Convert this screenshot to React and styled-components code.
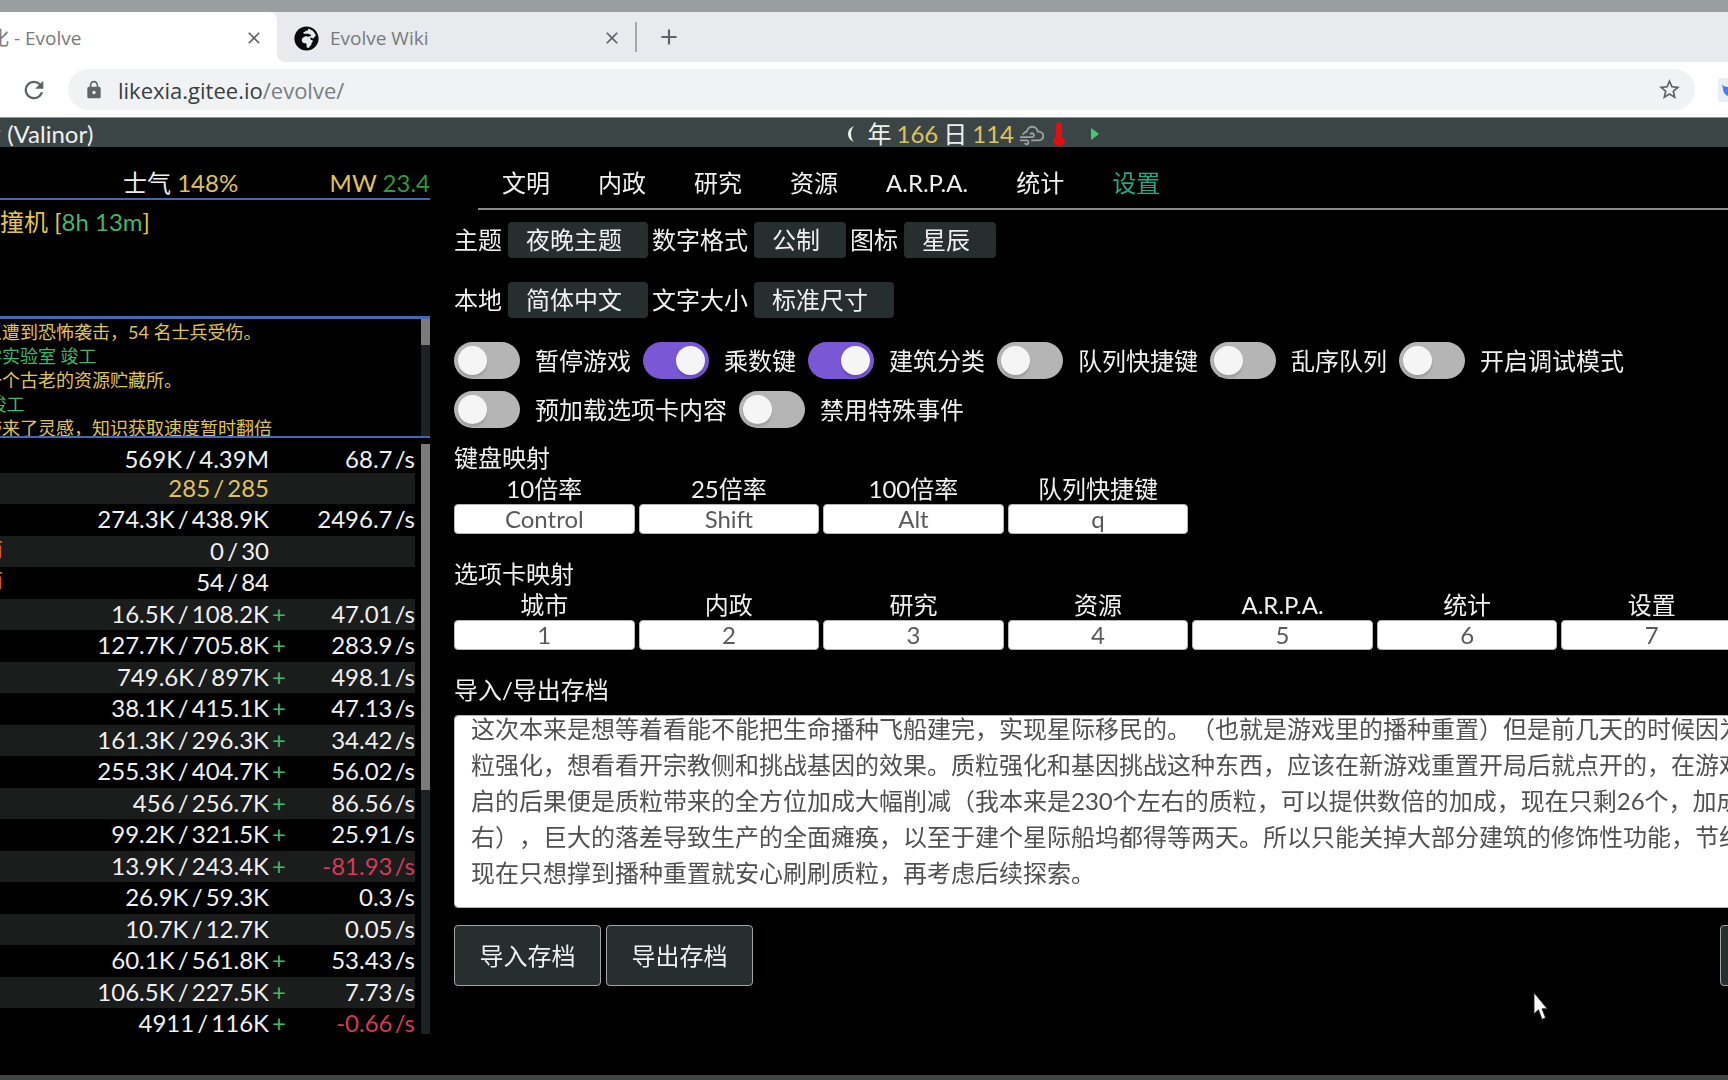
import React, { useEffect, useRef } from 'react';
import styled, { createGlobalStyle } from 'styled-components';
import { MdAdd, MdClose, MdLock, MdRefresh, MdStarBorder } from 'react-icons/md';
import { FaGlobeAfrica } from 'react-icons/fa';
import { WiCloudyGusts } from 'react-icons/wi';

const GlobalStyle = createGlobalStyle`
	* {
		box-sizing: border-box;
	}

	body {
		margin: 0;
		overflow: hidden;
		background: #000;
		color: #f0f0f0;
		font-family: Lato, "Noto Sans CJK SC", sans-serif;
		font-size: 24px;
		line-height: 32px;
		text-spacing-trim: space-all;
	}

	button, input, select, textarea {
		margin: 0;
		font: inherit;
		color: inherit;
	}
`

const colors = {
	bar: '#3b4545',
	button: '#272e2e',
	blue: '#4069b4',
	warning: '#e0c25a',
	success: '#43b768',
	green: '#2c9a3c',
	danger: '#d6395a',
	orange: '#d2691e'
};

const Screen = styled.div`
	display: flex;
	flex-direction: column;
	height: 100vh;
	overflow: hidden;
`

/* browser chrome */

const Browser = styled.header`
	border-top: 12px solid #9b9e9f;
	border-bottom: 1px solid #8f9797;
	background: #fff;
	color: #5f6368;
	font-family: "Open Sans", "Noto Sans CJK SC", sans-serif;
`

const TabStrip = styled.div`
	display: flex;
	align-items: center;
	height: 50px;
	background: #e8eaed;
	font-size: 19px;
`

const BrowserTab = styled.div`
	display: flex;
	align-items: center;
	flex: none;
	width: ${props => props.$active ? '301px' : '358px'};
	height: 50px;
	margin-left: ${props => props.$active ? '-24px' : '0'};
	padding: ${props => props.$active ? '2px 13px 0 14px' : '2px 13px 0 17px'};
	gap: 11px;
	border-radius: ${props => props.$active ? '0 8px 0 0' : '0 0 0 8px'};
	background: ${props => props.$active ? '#fff' : '#e8eaed'};
	color: #777a7e;
`

/* white behind the rounded foot of the inactive tab */
const TabFoot = styled.div`
	background: #fff;
`

const TabTitle = styled.span`
	flex: 1;
	white-space: nowrap;
`

const IconButton = styled.button`
	display: flex;
	padding: 0;
	border: 0;
	background: none;
	color: #5f6368;
`

const NewTab = styled.div`
	display: flex;
	align-items: center;
	height: 30px;
	padding-left: 19px;
	border-left: 2px solid #a5a8ac;
`

const AddressRow = styled.div`
	display: flex;
	align-items: center;
	height: 55px;
	padding-left: 20px;
`

const AddressBox = styled.div`
	display: flex;
	align-items: center;
	flex: 1;
	height: 41px;
	margin: 0 23px 0 20px;
	padding: 0 13px 0 16px;
	gap: 14px;
	border-radius: 21px;
	background: #f0f2f4;
`

const Address = styled.span`
	flex: 1;
	color: #7a7d81;
	font-size: 22px;
	line-height: 30px;

	b {
		color: #3a3d41;
		font-weight: 400;
	}
`

const Extension = styled.div`
	display: flex;
	width: 10px;
	height: 24px;
	border-radius: 3px 0 0 3px;
	background: #eaeefb;
`

/* game */

const TopBar = styled.div`
	display: flex;
	flex: none;
	align-items: center;
	justify-content: space-between;
	height: 29px;
	padding: 3px 628px 0 0;
	background: ${colors.bar};
`

const Planet = styled.span`
	margin-left: -23px;
	white-space: nowrap;
`

const Calendar = styled.span`
	display: flex;
	align-items: center;
	gap: 5px;
`

const Weather = styled.span`
	display: flex;
	align-items: center;
	gap: 4px;
	margin-left: -3px;
	color: #9aa39c;
`

const PlayButton = styled(IconButton)`
	margin-left: 19px;
`

const Value = styled.span`
	color: ${props => colors[props.$tone]};
`

const Columns = styled.div`
	display: flex;
	flex: 1;
	min-height: 0;
`

const LeftColumn = styled.aside`
	display: flex;
	flex: none;
	flex-direction: column;
	width: 454px;
	margin-left: -24px;
`

const Stats = styled.div`
	display: flex;
	justify-content: space-between;
	height: 53px;
	padding: 20px 0 0 147px;
	border-bottom: 2px solid ${colors.blue};
`

const Queue = styled.div`
	height: 116px;
	padding-top: 6px;
	color: ${colors.warning};
`

const Messages = styled.div`
	display: flex;
	justify-content: space-between;
	height: 122px;
	border-top: 3px solid ${colors.blue};
	border-bottom: 2px solid ${colors.blue};
`

const MessageList = styled.div`
	overflow: hidden;
	padding: 1px 0 0 8px;
	font-size: 18px;
	line-height: 24px;
	white-space: pre;
`

const Message = styled.div`
	color: ${props => colors[props.$tone]};
`

const ScrollTrack = styled.div`
	flex: none;
	width: 9px;
	background: #1d2121;
`

const ScrollThumb = styled.div`
	height: ${props => props.$size};
	background: #7b7b7b;
`

const Resources = styled.div`
	display: flex;
	flex: 1;
	min-height: 0;
	gap: 6px;
	margin: 6px 0 41px;
	overflow: hidden;
`

const ResourceTable = styled.table`
	flex: 1;
	align-self: flex-start;
	table-layout: fixed;
	border-collapse: collapse;
	text-align: right;
	line-height: 30px;
	white-space: nowrap;

	tr {
		height: 32px;
	}

	tr:nth-child(even) {
		height: 31px;
		background: #1b1c1c;
	}

	tr:first-child {
		height: 29px;
		line-height: 29px;
	}

	td {
		padding: 0;
		vertical-align: top;
	}
`

const NameCell = styled.td`
	width: 27px;
	color: ${colors.orange};
`

const AmountCell = styled.td`
	color: ${props => props.$full ? colors.warning : 'inherit'};
`

const Slash = styled.span`
	margin: 0 -3px;
`

const PlusCell = styled.td`
	width: 17px;
	color: ${colors.success};
`

const RateCell = styled.td`
	width: 129px;
	color: ${props => props.$negative ? colors.danger : 'inherit'};
`

const PerSecond = styled.span`
	margin-left: -4px;
`

const Main = styled.main`
	flex: 1;
	min-width: 0;
	margin: 0 -14px 0 24px;
`

const Tabs = styled.nav`
	display: flex;
	height: 63px;
	margin-left: 24px;
	padding-top: 20px;
	border-bottom: 2px solid #8a8a8a;
`

const Tab = styled.a`
	padding: 0 24px;
	color: ${props => props.$active ? '#2aa583' : 'inherit'};
	text-decoration: none;
`

const Options = styled.div`
	display: flex;
	flex-direction: column;
	gap: 24px;
	margin: 12px 0 24px;
`

const OptionRow = styled.div`
	display: flex;
	gap: 4px;
`

const Option = styled.label`
	display: flex;
	align-items: center;
	gap: 6px;
	height: 36px;
`

const Select = styled.select`
	appearance: none;
	height: 36px;
	padding: 0 26px 0 18px;
	border: 0;
	border-radius: 4px;
	background: ${colors.button};
`

const Switches = styled.div`
	display: flex;
	flex-wrap: wrap;
	gap: 12px;
`

const SwitchLabel = styled.label`
	display: flex;
	align-items: center;
	gap: 15px;
	height: 37px;
`

const Switch = styled.input`
	appearance: none;
	display: flex;
	width: 66px;
	height: 37px;
	padding: 4px;
	border-radius: 19px;
	background: #b5b5b5;

	&::before {
		content: '';
		width: 29px;
		height: 29px;
		border-radius: 50%;
		background: #f5f5f5;
		box-shadow: 0 3px 2px rgba(0, 0, 0, 0.12);
	}

	&:checked {
		justify-content: flex-end;
		background: #7957d5;
	}
`

const Heading = styled.div`
	margin-top: ${props => props.$first ? '14px' : '24px'};
`

const KeyGrid = styled.div`
	display: grid;
	grid-template-columns: repeat(7, 1fr);
	gap: 4px;
`

const Key = styled.label`
	display: flex;
	flex-direction: column;
	line-height: 30px;
	text-align: center;
`

const KeyInput = styled.input`
	width: 100%;
	height: 30px;
	padding: 0;
	border: 1px solid #b5b5b5;
	border-radius: 4px;
	background: #fff;
	color: #5a5a5a;
	text-align: center;
`

const SaveData = styled.textarea`
	display: block;
	width: 100%;
	height: 193px;
	margin-top: 9px;
	padding: 16px;
	border: 1px solid #b5b5b5;
	border-radius: 4px;
	background: #fff;
	color: #505050;
	line-height: 36px;
	white-space: pre;
	resize: none;
	scrollbar-width: none;
`

const Buttons = styled.div`
	display: flex;
	gap: 5px;
	margin: 17px -125px 0 0;
`

const Button = styled.button`
	min-width: 147px;
	height: 61px;
	padding: 0 24px;
	border: 1px solid #a0a5a5;
	border-radius: 4px;
	background: ${colors.button};

	&:last-child {
		margin-left: auto;
	}
`

const BottomBar = styled.footer`
	flex: none;
	height: 5px;
	background: ${colors.bar};
`

const Pointer = styled.svg`
	position: absolute;
	left: 1533px;
	top: 991px;
`

const resources = [
	{ amount: '569K', max: '4.39M', rate: '68.7' },
	{ amount: '285', max: '285', full: true },
	{ amount: '274.3K', max: '438.9K', rate: '2496.7' },
	{ name: '师', amount: '0', max: '30' },
	{ name: '师', amount: '54', max: '84' },
	{ amount: '16.5K', max: '108.2K', plus: true, rate: '47.01' },
	{ amount: '127.7K', max: '705.8K', plus: true, rate: '283.9' },
	{ amount: '749.6K', max: '897K', plus: true, rate: '498.1' },
	{ amount: '38.1K', max: '415.1K', plus: true, rate: '47.13' },
	{ amount: '161.3K', max: '296.3K', plus: true, rate: '34.42' },
	{ amount: '255.3K', max: '404.7K', plus: true, rate: '56.02' },
	{ amount: '456', max: '256.7K', plus: true, rate: '86.56' },
	{ amount: '99.2K', max: '321.5K', plus: true, rate: '25.91' },
	{ amount: '13.9K', max: '243.4K', plus: true, rate: '-81.93' },
	{ amount: '26.9K', max: '59.3K', rate: '0.3' },
	{ amount: '10.7K', max: '12.7K', rate: '0.05' },
	{ amount: '60.1K', max: '561.8K', plus: true, rate: '53.43' },
	{ amount: '106.5K', max: '227.5K', plus: true, rate: '7.73' },
	{ amount: '4911', max: '116K', plus: true, rate: '-0.66' }
];

const messages = [
	['warning', '人遭到恐怖袭击，54 名士兵受伤。'],
	['success', '学实验室 竣工'],
	['warning', '一个古老的资源贮藏所。'],
	['success', ' 竣工'],
	['warning', '带来了灵感，知识获取速度暂时翻倍']
];

const tabs = ['文明', '内政', '研究', '资源', 'A.R.P.A.', '统计', '设置'];

const options = [
	[['主题', '夜晚主题'], ['数字格式', '公制'], ['图标', '星辰']],
	[['本地', '简体中文'], ['文字大小', '标准尺寸']]
];

const switches = [
	['暂停游戏', false],
	['乘数键', true],
	['建筑分类', true],
	['队列快捷键', false],
	['乱序队列', false],
	['开启调试模式', false],
	['预加载选项卡内容', false],
	['禁用特殊事件', false]
];

const keyMap = [['10倍率', 'Control'], ['25倍率', 'Shift'], ['100倍率', 'Alt'], ['队列快捷键', 'q']];

const tabMap = [
	['城市', '1'], ['内政', '2'], ['研究', '3'], ['资源', '4'],
	['A.R.P.A.', '5'], ['统计', '6'], ['设置', '7']
];

const saveText = [
	'这次本来是想等着看能不能把生命播种飞船建完，实现星际移民的。（也就是游戏里的播种重置）但是前几天的时候因为',
	'粒强化，想看看开宗教侧和挑战基因的效果。质粒强化和基因挑战这种东西，应该在新游戏重置开局后就点开的，在游戏',
	'启的后果便是质粒带来的全方位加成大幅削减（我本来是230个左右的质粒，可以提供数倍的加成，现在只剩26个，加成',
	'右），巨大的落差导致生产的全面瘫痪，以至于建个星际船坞都得等两天。所以只能关掉大部分建筑的修饰性功能，节约',
	'现在只想撑到播种重置就安心刷刷质粒，再考虑后续探索。'
].join('\n');

const ResourceRow = ({ name, amount, max, full, plus, rate }) => (
	<tr>
		<NameCell>{name}</NameCell>
		<AmountCell $full={full}>{amount} <Slash>/</Slash> {max}</AmountCell>
		<PlusCell>{plus && '+'}</PlusCell>
		<RateCell $negative={rate && rate.startsWith('-')}>
			{rate && <>{rate} <PerSecond>/s</PerSecond></>}
		</RateCell>
	</tr>
);

const KeyFields = ({ items }) => (
	<KeyGrid>
		{items.map(([label, value]) => (
			<Key key={label}>
				{label}
				<KeyInput type="text" defaultValue={value} />
			</Key>
		))}
	</KeyGrid>
);

const BrowserChrome = () => (
	<Browser>
		<TabStrip>
			<BrowserTab $active>
				<TabTitle>化 - Evolve</TabTitle>
				<IconButton aria-label="Close tab"><MdClose size={20} /></IconButton>
			</BrowserTab>
			<TabFoot>
				<BrowserTab>
					<FaGlobeAfrica size={25} color="#0a0a0a" />
					<TabTitle>Evolve Wiki</TabTitle>
					<IconButton aria-label="Close tab"><MdClose size={20} /></IconButton>
				</BrowserTab>
			</TabFoot>
			<NewTab>
				<IconButton aria-label="New tab"><MdAdd size={26} /></IconButton>
			</NewTab>
		</TabStrip>
		<AddressRow>
			<IconButton aria-label="Reload"><MdRefresh size={28} /></IconButton>
			<AddressBox>
				<MdLock size={20} />
				<Address><b>likexia.gitee.io</b>/evolve/</Address>
				<IconButton aria-label="Bookmark"><MdStarBorder size={25} /></IconButton>
			</AddressBox>
			<Extension>
				<svg width="10" height="24" viewBox="0 0 10 24">
					<path d="M4 6c1 2 3 3 6 3v9c-3-1-5-4-5-7z" fill="#4e7be8" />
				</svg>
			</Extension>
		</AddressRow>
	</Browser>
);

const App = () => {
	const saveRef = useRef(null);

	useEffect(() => {
		saveRef.current.scrollTop = saveRef.current.scrollHeight;
	}, []);

	return (
		<Screen>
			<GlobalStyle />
			<BrowserChrome />
			<TopBar>
				<Planet>精 (Valinor)</Planet>
				<Calendar>
					<svg width="18" height="20" viewBox="0 0 18 20">
						<path d="M10 2C2 5 2 15 10 18C6 14 6 6 10 2z" fill="#f0f0f0" />
					</svg>
					年 <Value $tone="warning">166</Value> 日 <Value $tone="warning">114</Value>
					<Weather>
						<WiCloudyGusts size={32} />
						<svg width="14" height="26" viewBox="0 0 14 26">
							<path d="M7 1a3 3 0 0 1 3 3v12a6 5 0 1 1-6 0V4a3 3 0 0 1 3-3z" fill="#dd1111" />
						</svg>
					</Weather>
					<PlayButton aria-label="Play">
						<svg width="10" height="14" viewBox="0 0 10 14">
							<path d="M1 1l8 6-8 6z" fill="#48c774" />
						</svg>
					</PlayButton>
				</Calendar>
			</TopBar>
			<Columns>
				<LeftColumn>
					<Stats>
						<span>士气 <Value $tone="warning">148%</Value></span>
						<span><Value $tone="warning">MW</Value> <Value $tone="green">23.4</Value></span>
					</Stats>
					<Queue>对撞机 [<Value $tone="success">8h 13m</Value>]</Queue>
					<Messages>
						<MessageList>
							{messages.map(([tone, text]) => (
								<Message key={text} $tone={tone}>{text}</Message>
							))}
						</MessageList>
						<ScrollTrack><ScrollThumb $size="26px" /></ScrollTrack>
					</Messages>
					<Resources>
						<ResourceTable>
							<tbody>
								{resources.map(res => <ResourceRow key={res.amount} {...res} />)}
							</tbody>
						</ResourceTable>
						<ScrollTrack><ScrollThumb $size="346px" /></ScrollTrack>
					</Resources>
				</LeftColumn>
				<Main>
					<Tabs>
						{tabs.map(tab => (
							<Tab key={tab} href="#" $active={tab === '设置'}>{tab}</Tab>
						))}
					</Tabs>
					<Options>
						{options.map((row, i) => (
							<OptionRow key={i}>
								{row.map(([label, value]) => (
									<Option key={label}>
										{label}
										<Select><option>{value}</option></Select>
									</Option>
								))}
							</OptionRow>
						))}
					</Options>
					<Switches>
						{switches.map(([label, on]) => (
							<SwitchLabel key={label}>
								<Switch type="checkbox" defaultChecked={on} />
								{label}
							</SwitchLabel>
						))}
					</Switches>
					<Heading $first>键盘映射</Heading>
					<KeyFields items={keyMap} />
					<Heading>选项卡映射</Heading>
					<KeyFields items={tabMap} />
					<Heading>
						<label htmlFor="save">导入/导出存档</label>
					</Heading>
					<SaveData id="save" ref={saveRef} defaultValue={saveText} wrap="off" />
					<Buttons>
						<Button>导入存档</Button>
						<Button>导出存档</Button>
						<Button aria-label="Restore" />
					</Buttons>
				</Main>
			</Columns>
			<BottomBar />
			<Pointer width="18" height="32" viewBox="0 0 20 36">
				<path d="M1 2v24l5-5 4 11 4-2-4-10h6z" fill="#fff" stroke="#222" />
			</Pointer>
		</Screen>
	);
};

export default App;
